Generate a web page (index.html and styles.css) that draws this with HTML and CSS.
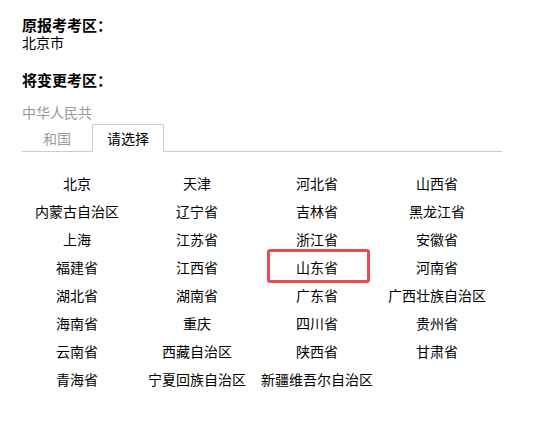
FILE: index.html
```html
<!DOCTYPE html>
<html lang="zh-CN">
<head>
<meta charset="utf-8">
<title>变更考区</title>
<link rel="stylesheet" href="styles.css">
</head>
<body>
<div class="page">
  <div class="label">原报考考区：</div>
  <div class="value">北京市</div>
  <div class="label label-next">将变更考区：</div>
  <div class="tabs">
    <div class="tab">中华人民共和国</div>
    <div class="tab tab-active">请选择</div>
  </div>
  <div class="grid">
    <div class="item">北京</div>
    <div class="item">天津</div>
    <div class="item">河北省</div>
    <div class="item">山西省</div>
    <div class="item">内蒙古自治区</div>
    <div class="item">辽宁省</div>
    <div class="item">吉林省</div>
    <div class="item">黑龙江省</div>
    <div class="item">上海</div>
    <div class="item">江苏省</div>
    <div class="item">浙江省</div>
    <div class="item">安徽省</div>
    <div class="item">福建省</div>
    <div class="item">江西省</div>
    <div class="item item-marked">山东省</div>
    <div class="item">河南省</div>
    <div class="item">湖北省</div>
    <div class="item">湖南省</div>
    <div class="item">广东省</div>
    <div class="item">广西壮族自治区</div>
    <div class="item">海南省</div>
    <div class="item">重庆</div>
    <div class="item">四川省</div>
    <div class="item">贵州省</div>
    <div class="item">云南省</div>
    <div class="item">西藏自治区</div>
    <div class="item">陕西省</div>
    <div class="item">甘肃省</div>
    <div class="item">青海省</div>
    <div class="item">宁夏回族自治区</div>
    <div class="item">新疆维吾尔自治区</div>
  </div>
</div>
</body>
</html>
```

FILE: styles.css
```css
html, body {
  margin: 0;
  padding: 0;
  background: #fff;
}

body {
  font-family: "Noto Sans CJK SC", "Liberation Sans", sans-serif;
  color: #000;
}

.page {
  padding: 16px 0 0 22px;
  width: 480px;
}

.label {
  font-size: 15px;
  font-weight: bold;
  line-height: 18px;
}

.label-next {
  margin-top: 20px;
}

.value {
  font-size: 14px;
  line-height: 17px;
}

.tabs {
  display: flex;
  align-items: flex-end;
  margin-top: 9px;
  border-bottom: 1px solid #cccccc;
}

.tab {
  width: 70px;
  font-size: 14px;
  line-height: 26px;
  text-align: center;
  color: #999999;
  border-top: 1px solid transparent;
  border-bottom: 1px solid transparent;
  margin-bottom: -1px;
}

.tab-active {
  color: #000;
  border: 1px solid #cccccc;
  border-bottom-color: #fff;
  background: #fff;
}

.grid {
  display: grid;
  grid-template-columns: repeat(4, 110px);
  column-gap: 10px;
  margin-top: 17px;
}

.item {
  font-size: 14px;
  line-height: 28px;
  height: 28px;
  text-align: center;
  white-space: nowrap;
  display: flex;
  justify-content: center;
}

.item-marked {
  position: relative;
}

.item-marked::after {
  content: "";
  position: absolute;
  left: 5px;
  right: 2px;
  top: -4px;
  bottom: -2px;
  border: 3px solid #ee4a52;
  border-radius: 3px;
}
```
